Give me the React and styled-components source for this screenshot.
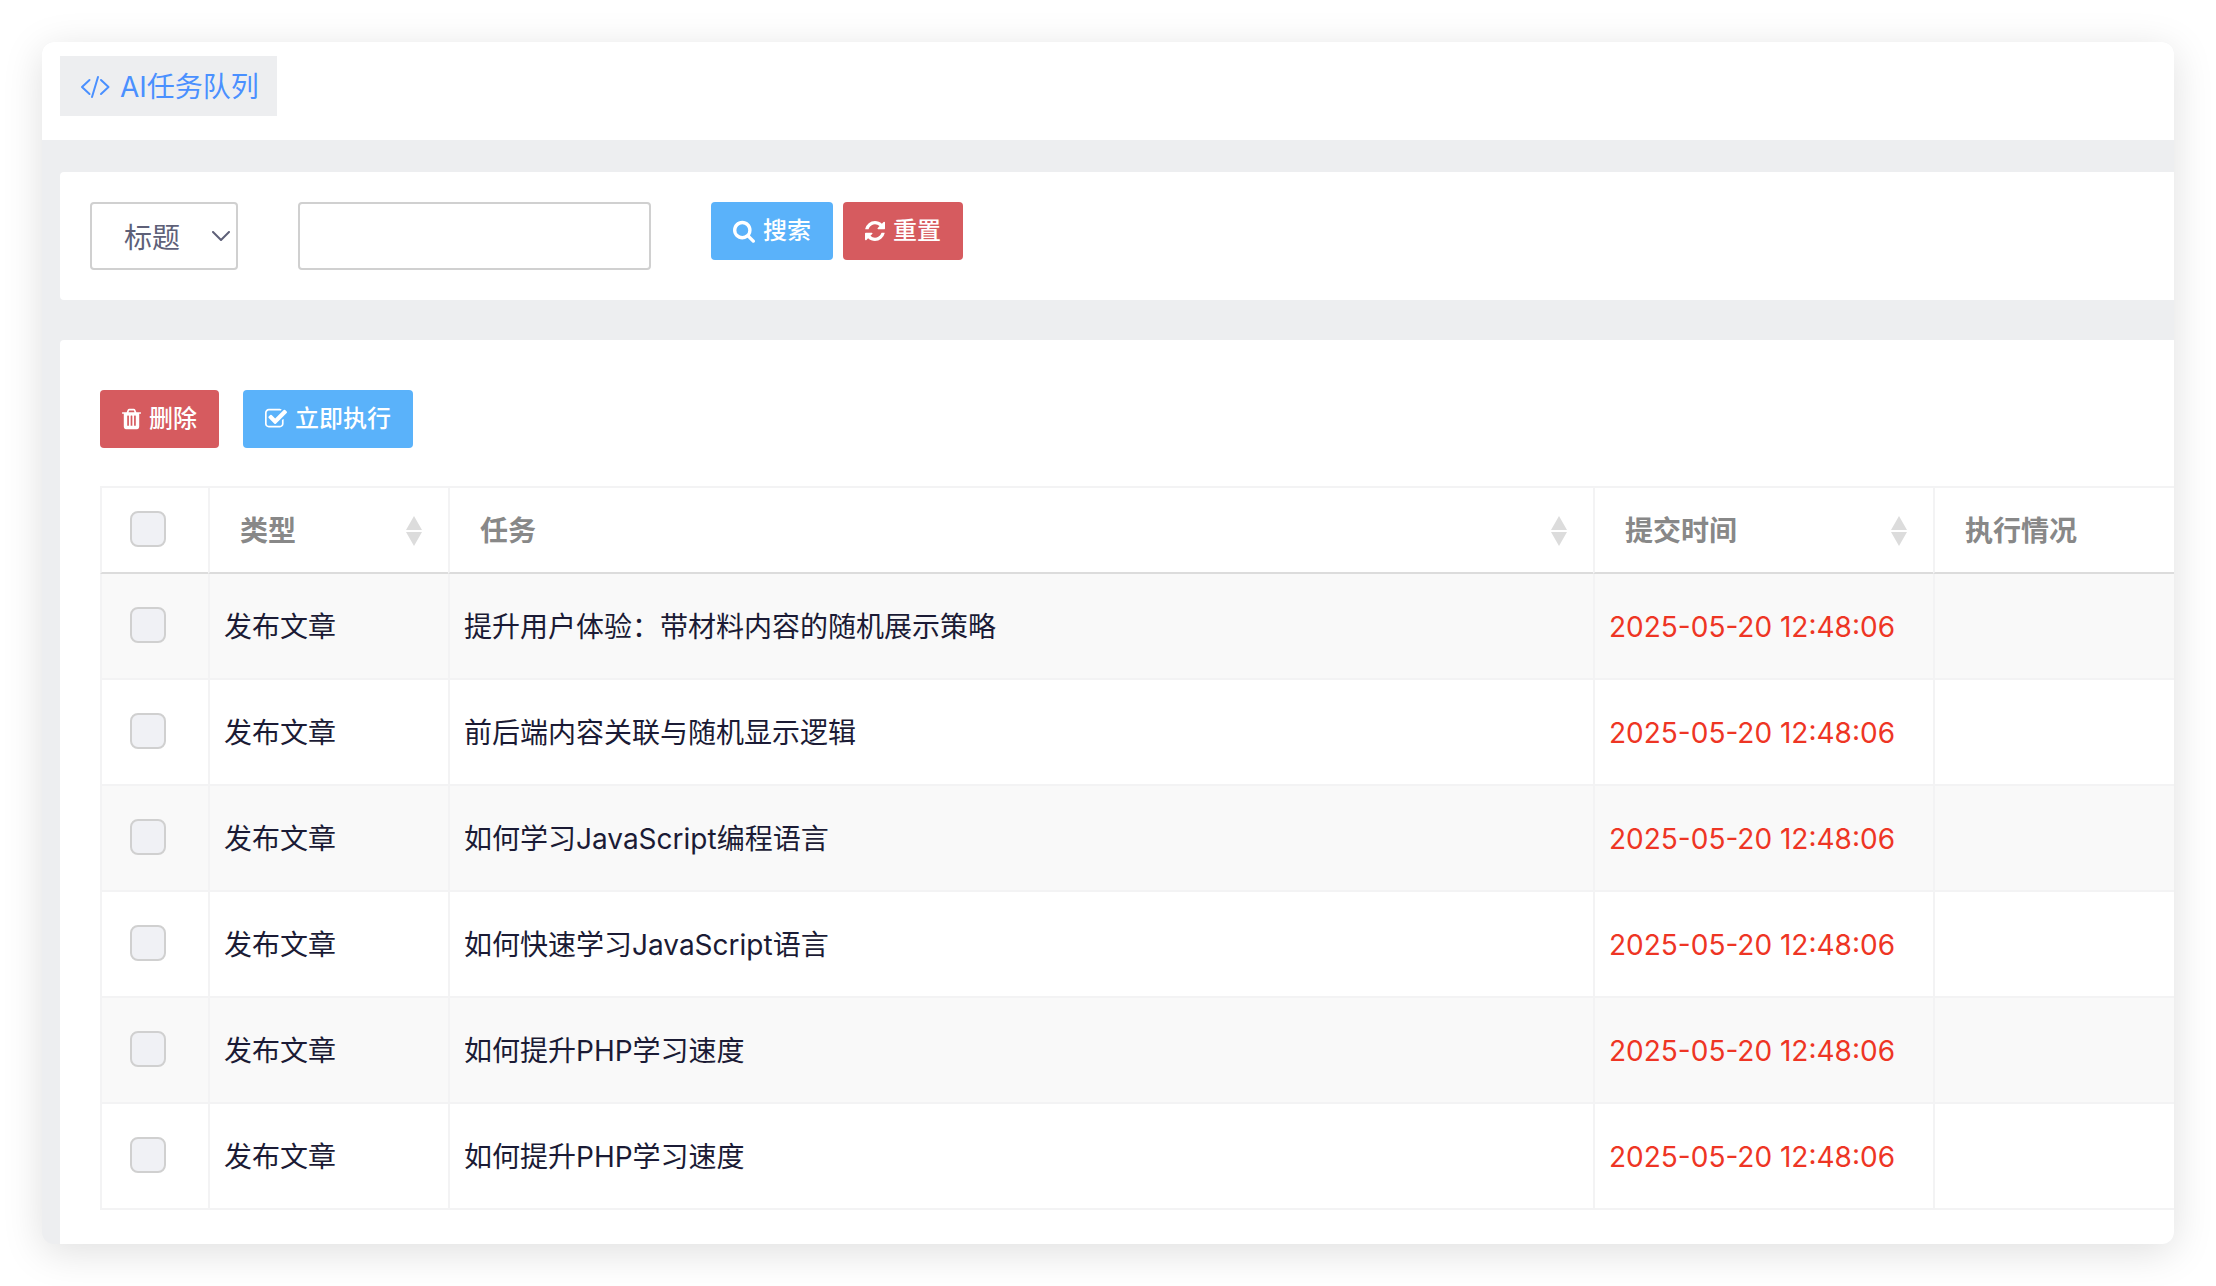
import styled, { createGlobalStyle, css } from 'styled-components';

const tasks = [
    { id: 1, type: '发布文章', title: '提升用户体验：带材料内容的随机展示策略', time: '2025-05-20 12:48:06' },
    { id: 2, type: '发布文章', title: '前后端内容关联与随机显示逻辑', time: '2025-05-20 12:48:06' },
    { id: 3, type: '发布文章', title: '如何学习JavaScript编程语言', time: '2025-05-20 12:48:06' },
    { id: 4, type: '发布文章', title: '如何快速学习JavaScript语言', time: '2025-05-20 12:48:06' },
    { id: 5, type: '发布文章', title: '如何提升PHP学习速度', time: '2025-05-20 12:48:06' },
    { id: 6, type: '发布文章', title: '如何提升PHP学习速度', time: '2025-05-20 12:48:06' },
];

const CodeIcon = () => (
    <svg width="30" height="24" viewBox="0 0 30 24" fill="none" stroke="currentColor" strokeWidth="2" strokeLinecap="round" strokeLinejoin="round" aria-hidden="true">
        <path d="M9.500 5L2 12l7.500 7M21 5l7.500 7-7.500 7M18 2l-6 20" />
    </svg>
);

const SearchIcon = () => (
    <svg width="22" height="24" viewBox="64 0 1664 1792" fill="currentColor" aria-hidden="true">
        <path d="M1216 832q0-185-131.5-316.5t-316.5-131.5-316.5 131.5-131.5 316.5 131.5 316.5 316.5 131.5 316.5-131.5 131.5-316.5zm512 832q0 52-38 90t-90 38q-54 0-90-38l-343-342q-179 124-399 124-143 0-273.5-55.5t-225-150-150-225-55.5-273.5 55.5-273.5 150-225 225-150 273.5-55.5 273.5 55.5 225 150 150 225 55.5 273.5q0 220-124 399l343 343q37 37 37 90z" />
    </svg>
);

const RefreshIcon = () => (
    <svg width="20" height="24" viewBox="128 0 1536 1792" fill="currentColor" aria-hidden="true">
        <path d="M1639 1056q0 5-1 7-64 268-268 434.5t-478 166.5q-146 0-282.5-55t-243.5-157l-129 129q-19 19-45 19t-45-19-19-45v-448q0-26 19-45t45-19h448q26 0 45 19t19 45-19 45l-137 137q71 66 161 102t187 36q134 0 250-65t186-179q11-17 53-117 8-23 30-23h192q13 0 22.5 9.5t9.5 22.5zm25-800v448q0 26-19 45t-45 19h-448q-26 0-45-19t-19-45 19-45l138-138q-148-137-349-137-134 0-250 65t-186 179q-11 17-53 117-8 23-30 23h-199q-13 0-22.5-9.5t-9.5-22.5v-7q65-268 270-434.5t480-166.5q146 0 284 55.5t245 156.5l130-129q19-19 45-19t45 19 19 45z" />
    </svg>
);

const TrashIcon = () => (
    <svg width="19" height="24" viewBox="192 0 1408 1792" fill="currentColor" aria-hidden="true">
        <path d="M704 1376v-704q0-14-9-23t-23-9h-64q-14 0-23 9t-9 23v704q0 14 9 23t23 9h64q14 0 23-9t9-23zm256 0v-704q0-14-9-23t-23-9h-64q-14 0-23 9t-9 23v704q0 14 9 23t23 9h64q14 0 23-9t9-23zm256 0v-704q0-14-9-23t-23-9h-64q-14 0-23 9t-9 23v704q0 14 9 23t23 9h64q14 0 23-9t9-23zm-544-992h448l-48-117q-7-9-17-11h-317q-10 2-17 11zm928 32v64q0 14-9 23t-23 9h-96v948q0 83-47 143.5t-113 60.5h-832q-66 0-113-58.5t-47-141.5v-952h-96q-14 0-23-9t-9-23v-64q0-14 9-23t23-9h309l70-167q15-37 54-63t79-26h320q40 0 79 26t54 63l70 167h309q14 0 23 9t9 23z" />
    </svg>
);

const CheckIcon = () => (
    <svg width="22" height="24" viewBox="64 0 1664 1792" fill="currentColor" aria-hidden="true">
        <path d="M1472 930v318q0 119-84.5 203.5t-203.5 84.5h-832q-119 0-203.5-84.5t-84.5-203.5v-832q0-119 84.5-203.5t203.5-84.5h832q63 0 117 25 15 7 18 23 3 17-9 29l-49 49q-10 10-23 10-3 0-9-2-23-6-45-6h-832q-66 0-113 47t-47 113v832q0 66 47 113t113 47h832q66 0 113-47t47-113v-254q0-13 9-22l64-64q10-10 23-10 6 0 12 3 20 8 20 29zm231-489l-814 814q-24 24-57 24t-57-24l-430-430q-24-24-24-57t24-57l110-110q24-24 57-24t57 24l263 263 647-647q24-24 57-24t57 24l110 110q24 24 24 57t-24 57z" />
    </svg>
);

const ChevronIcon = () => (
    <svg width="18" height="10" viewBox="0 0 18 10" fill="none" stroke="currentColor" strokeWidth="2" strokeLinecap="round" strokeLinejoin="round" aria-hidden="true">
        <path d="M1 1l8 8 8-8" />
    </svg>
);

const SortIcon = () => (
    <svg width="16" height="30" viewBox="0 0 16 30" fill="currentColor" aria-hidden="true">
        <path d="M8 0l8 14H0zM8 30l8-14H0z" />
    </svg>
);

const SortHead = ({ children }) => (
    <HeadLabel>
        {children}
        <SortButton type="button" aria-label="排序">
            <SortIcon />
        </SortButton>
    </HeadLabel>
);

const App = () => {
    return (
        <Page>
            <GlobalStyle />
            <Window>
                <TabBar>
                    <Tab href="#queue">
                        <CodeIcon />
                        AI任务队列
                    </Tab>
                </TabBar>
                <Content>
                    <FilterCard>
                        <SelectBox>
                            <Select aria-label="搜索字段" defaultValue="title">
                                <option value="title">标题</option>
                            </Select>
                            <ChevronIcon />
                        </SelectBox>
                        <SearchInput type="text" aria-label="关键词" />
                        <ButtonGroup>
                            <Button type="button"><SearchIcon />搜索</Button>
                            <Button type="button" $danger><RefreshIcon />重置</Button>
                        </ButtonGroup>
                    </FilterCard>

                    <TableCard>
                        <Toolbar>
                            <Button type="button" $danger><TrashIcon />删除</Button>
                            <Button type="button"><CheckIcon />立即执行</Button>
                        </Toolbar>
                        <Table>
                            <colgroup>
                                <col width="108" />
                                <col width="240" />
                                <col />
                                <col width="340" />
                                <col width="241" />
                            </colgroup>
                            <thead>
                                <tr>
                                    <HeadCell $check><Checkbox type="checkbox" aria-label="全选" /></HeadCell>
                                    <HeadCell><SortHead>类型</SortHead></HeadCell>
                                    <HeadCell><SortHead>任务</SortHead></HeadCell>
                                    <HeadCell><SortHead>提交时间</SortHead></HeadCell>
                                    <HeadCell><HeadLabel>执行情况</HeadLabel></HeadCell>
                                </tr>
                            </thead>
                            <tbody>
                                {tasks.map((task) => (
                                    <Row key={task.id}>
                                        <Cell $check><Checkbox type="checkbox" aria-label={task.title} /></Cell>
                                        <Cell>{task.type}</Cell>
                                        <Cell>{task.title}</Cell>
                                        <Cell $alert>{task.time}</Cell>
                                        <Cell />
                                    </Row>
                                ))}
                            </tbody>
                        </Table>
                    </TableCard>
                </Content>
            </Window>
        </Page>
    );
}

export default App;

const GlobalStyle = createGlobalStyle`
    *, *::before, *::after {
        box-sizing: border-box;
    }

    body {
        margin: 0;
        background: #fff;
        color: #1b1b35;
        font-family: Inter, "Noto Sans CJK SC", sans-serif;
        font-size: 28px;
        line-height: 40px;
    }

    button, input, select {
        font: inherit;
        margin: 0;
    }

    svg {
        display: block;
        flex: none;
    }
`;

const Page = styled.main`
    padding: 42px;
`;

const Window = styled.div`
    border-radius: 12px;
    overflow: hidden;
    background: #edeef0;
    box-shadow: 0 8px 40px rgba(0, 0, 0, 0.13);
`;

const TabBar = styled.nav`
    display: flex;
    padding: 14px 18px 24px;
    background: #fff;
`;

const Tab = styled.a`
    display: flex;
    align-items: center;
    gap: 10px;
    height: 60px;
    padding: 2px 18px 0 20px;
    background: #edeef0;
    color: #4a90ff;
    text-decoration: none;
`;

const Content = styled.div`
    display: flex;
    flex-direction: column;
    gap: 40px;
    padding: 32px 0 0 18px;
`;

const Card = styled.section`
    background: #fff;
    border-radius: 4px 0 0 4px;
`;

const FilterCard = styled(Card)`
    display: flex;
    align-items: flex-start;
    gap: 60px;
    padding: 30px;
`;

const field = css`
    height: 68px;
    border: 2px solid #d0d0d0;
    border-radius: 4px;
    background: #fff;
    color: #5e6078;
`;

const SelectBox = styled.div`
    display: grid;
    align-items: center;
    width: 148px;
    color: #5e6078;

    > * {
        grid-area: 1 / 1;
    }

    svg {
        justify-self: end;
        margin-right: 8px;
        pointer-events: none;
    }
`;

const Select = styled.select`
    ${field}
    width: 100%;
    padding: 4px 32px 0;
    appearance: none;
`;

const SearchInput = styled.input`
    ${field}
    width: 353px;
    padding: 0 20px;
`;

const ButtonGroup = styled.div`
    display: flex;
    gap: 10px;
`;

const Toolbar = styled.div`
    display: flex;
    gap: 24px;
    margin-bottom: 38px;
`;

const Button = styled.button`
    display: flex;
    align-items: center;
    gap: 8px;
    height: 58px;
    padding: 0 22px;
    border: 0;
    border-radius: 4px;
    background: ${({ $danger }) => ($danger ? '#d65b5f' : '#5ab2fa')};
    color: #fff;
    font-size: 24px;
    font-weight: 500;
    white-space: nowrap;
`;

const TableCard = styled(Card)`
    padding: 50px 0 34px 40px;
    border-bottom-left-radius: 0;
`;

const Table = styled.table`
    width: 100%;
    table-layout: fixed;
    border-collapse: separate;
    border-spacing: 0;
`;

const HeadCell = styled.th`
    height: 88px;
    padding: ${({ $check }) => ($check ? '0 28px 2px' : '2px 26px 0 30px')};
    border: solid #f3f3f4;
    border-width: 2px 0 2px 2px;
    border-bottom-color: #dcdcdc;
    color: #888;
    font-weight: 700;
    text-align: left;
`;

const HeadLabel = styled.div`
    display: flex;
    align-items: center;
    justify-content: space-between;
`;

const SortButton = styled.button`
    padding: 0;
    border: 0;
    background: none;
    color: #dcdcdc;
`;

const Cell = styled.td`
    height: 106px;
    padding: ${({ $check }) => ($check ? '0 28px 2px' : '2px 14px 0')};
    border: solid #f3f3f4;
    border-width: 0 0 2px 2px;
    color: ${({ $alert }) => ($alert ? '#ee3524' : 'inherit')};
    white-space: nowrap;
`;

const Row = styled.tr`
    &:nth-child(odd) {
        background: #f9f9f9;
    }
`;

const Checkbox = styled.input`
    display: block;
    width: 36px;
    height: 36px;
    appearance: none;
    border: 2px solid #d0d0d0;
    border-radius: 8px;
    background: #f0f1f5;
`;
